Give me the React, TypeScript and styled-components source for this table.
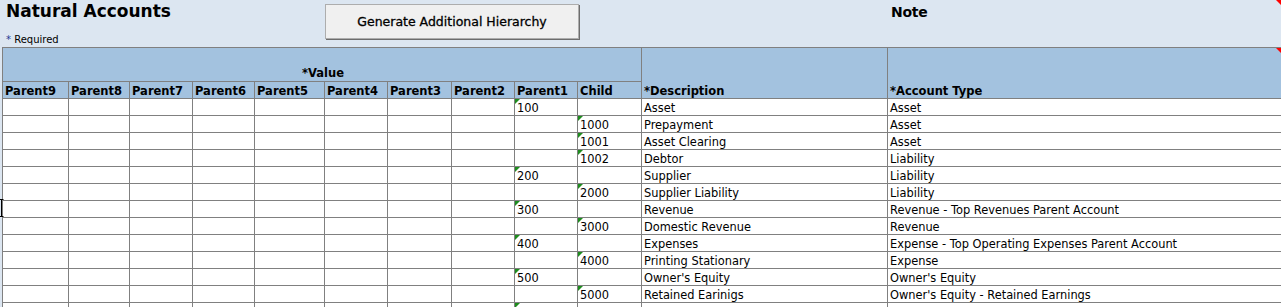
import React from 'react';
import styled, { createGlobalStyle } from 'styled-components';

interface Row {
  parent1: string;
  child: string;
  description: string;
  accountType: string;
  mark?: 'parent1' | 'child';
}

const rows: Row[] = [
  { parent1: '100', child: '', description: 'Asset', accountType: 'Asset' },
  { parent1: '', child: '1000', description: 'Prepayment', accountType: 'Asset' },
  { parent1: '', child: '1001', description: 'Asset Clearing', accountType: 'Asset' },
  { parent1: '', child: '1002', description: 'Debtor', accountType: 'Liability' },
  { parent1: '200', child: '', description: 'Supplier', accountType: 'Liability' },
  { parent1: '', child: '2000', description: 'Supplier Liability', accountType: 'Liability' },
  { parent1: '300', child: '', description: 'Revenue', accountType: 'Revenue - Top Revenues Parent Account' },
  { parent1: '', child: '3000', description: 'Domestic Revenue', accountType: 'Revenue' },
  { parent1: '400', child: '', description: 'Expenses', accountType: 'Expense - Top Operating Expenses Parent Account' },
  { parent1: '', child: '4000', description: 'Printing Stationary', accountType: 'Expense' },
  { parent1: '500', child: '', description: "Owner's Equity", accountType: "Owner's Equity" },
  { parent1: '', child: '5000', description: 'Retained Earinigs', accountType: "Owner's Equity - Retained Earnings" },
  { parent1: '', child: '', description: '', accountType: '', mark: 'parent1' },
];

const parents = ['Parent9', 'Parent8', 'Parent7', 'Parent6', 'Parent5', 'Parent4', 'Parent3', 'Parent2', 'Parent1', 'Child'];

const GlobalStyle = createGlobalStyle`
  html, body {
    margin: 0;
    padding: 0;
    background: #dce6f1;
    overflow: hidden;
  }
  body {
    font-family: "DejaVu Sans", Tahoma, sans-serif;
    color: #000;
  }
`;

const Page = styled.div`
  position: relative;
  width: 1281px;
  height: 307px;
  overflow: hidden;
`;

const TopBar = styled.div`
  position: relative;
  display: grid;
  grid-template-columns: 325px 254px 312px 1fr;
  height: 47px;
`;

const TitleBlock = styled.div`
  display: flex;
  flex-direction: column;
  justify-content: space-between;
  padding: 1px 0 1px 6px;
`;

const Title = styled.h1`
  margin: 0;
  font-size: 17px;
  font-weight: bold;
  line-height: 20px;
`;

const Required = styled.div`
  font-size: 10px;
  line-height: 12px;

  span {
    color: #1f3a93;
  }
`;

const ActionButton = styled.button`
  margin-top: 4px;
  height: 35px;
  background: #f0f0f0;
  border: 1px solid #adadad;
  box-shadow: 1px 1px 0 #6d6d6d;
  font-family: "DejaVu Sans", Tahoma, sans-serif;
  font-size: 12.5px;
  color: #000;
  padding: 0;
  cursor: default;
  -webkit-text-stroke: 0.3px #000;
`;

const Note = styled.div`
  grid-column: 4;
  padding: 4px 0 0 0;
  font-size: 14px;
  font-weight: bold;
  letter-spacing: -0.3px;
`;

const RedCorner = styled.span`
  position: absolute;
  top: 0;
  right: 0;
  width: 0;
  height: 0;
  border-top: 5px solid #ff0000;
  border-left: 5px solid transparent;
`;

const Sheet = styled.div`
  margin-left: 2px;
  display: grid;
  grid-template-columns: 65px 60px 62px 61px 69px 62px 63px 62px 62px 63px 245px 1fr;
  grid-template-rows: 33px 16px;
  grid-auto-rows: 16px;
  gap: 1px;
  padding: 1px 0 0 1px;
  background: #808080;
`;

const HeadCell = styled.div<{ $tall?: boolean; $span?: number }>`
  position: relative;
  background: #a3c2df;
  font-weight: bold;
  font-size: 11.5px;
  line-height: 16px;
  padding: 0 0 0 2px;
  white-space: nowrap;
  overflow: hidden;
  display: flex;
  align-items: flex-end;
  grid-row: ${p => (p.$tall ? 'span 2' : 'auto')};
  grid-column: ${p => (p.$span ? `span ${p.$span}` : 'auto')};

  & > b {
    font-weight: bold;
    position: relative;
    top: 1px;
  }
`;

const GroupCell = styled(HeadCell)`
  justify-content: center;
  padding-bottom: 1px;
`;

const Cell = styled.div`
  position: relative;
  background: #fff;
  font-size: 11.4px;
  line-height: 16px;
  padding: 1px 0 0 2px;
  white-space: nowrap;
  overflow: hidden;
`;

const GreenMark = styled.span`
  position: absolute;
  top: 0;
  left: 0;
  width: 0;
  height: 0;
  border-top: 5px solid #1e8c1e;
  border-right: 5px solid transparent;
`;

const Caret = styled.svg`
  position: absolute;
  left: 0;
  top: 199px;
`;

const ValueCell: React.FC<{ value: string; marked?: boolean }> = ({ value, marked }) => (
  <Cell>
    {(value || marked) && <GreenMark />}
    {value}
  </Cell>
);

const App: React.FC = () => {
  return (
    <Page>
      <GlobalStyle />
      <TopBar>
        <TitleBlock>
          <Title>Natural Accounts</Title>
          <Required><span>*</span> Required</Required>
        </TitleBlock>
        <ActionButton type="button">Generate Additional Hierarchy</ActionButton>
        <Note>Note</Note>
        <RedCorner />
      </TopBar>
      <Sheet>
        <GroupCell $span={10}><b>*Value</b></GroupCell>
        <HeadCell $tall><b>*Description</b></HeadCell>
        <HeadCell $tall>
          <b>*Account Type</b>
          <RedCorner />
        </HeadCell>
        {parents.map(name => (
          <HeadCell key={name}><b>{name}</b></HeadCell>
        ))}
        {rows.map((row, i) => (
          <React.Fragment key={i}>
            {Array.from({ length: 8 }).map((_, j) => (
              <Cell key={j} />
            ))}
            <ValueCell value={row.parent1} marked={row.mark === 'parent1'} />
            <ValueCell value={row.child} marked={row.mark === 'child'} />
            <Cell>{row.description}</Cell>
            <Cell>{row.accountType}</Cell>
          </React.Fragment>
        ))}
      </Sheet>
      <Caret width="4" height="18" viewBox="0 0 4 18">
        <path d="M0 0.5h3.5M1.5 0.5v17M0 17.5h3.5" stroke="#000" strokeWidth="1" fill="none" />
      </Caret>
    </Page>
  );
};

export default App;
